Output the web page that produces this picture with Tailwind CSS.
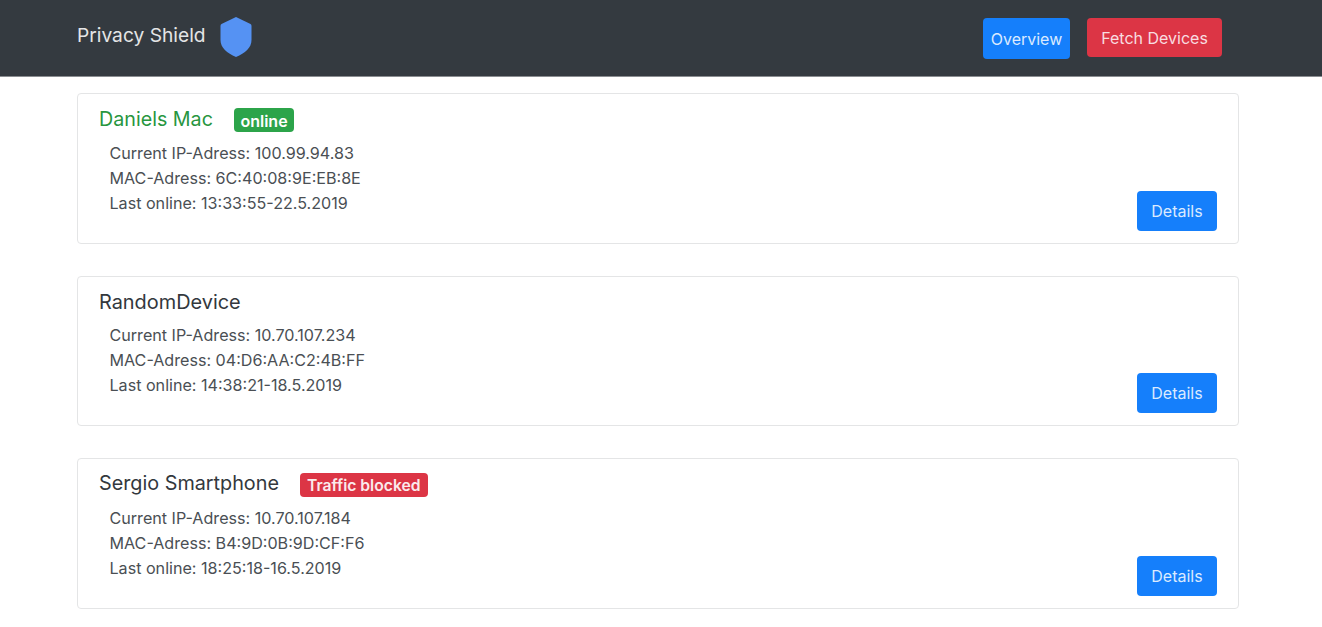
<!DOCTYPE html>
<html lang="en">
<head>
    <meta charset="UTF-8">
    <title>Privacy Shield</title>
    <script src="https://cdn.jsdelivr.net/npm/@tailwindcss/browser@4"></script>
</head>
<body class="bg-white font-['Inter','Liberation_Sans',sans-serif] text-[#343a40]">
    <!-- Navbar -->
    <nav class="h-[77px] bg-[#343a40] border-b border-[#8a8d91] flex items-center pl-[77px] pr-[100px]">
        <span class="text-[19.2px] text-[#e4e5e6] leading-none mb-[4px]">Privacy Shield</span>
        <svg class="ml-[14px] mb-[3px]" width="32" height="42" viewBox="0 0 32 42">
            <path d="M16 1 L30.5 8 Q31.5 8.5 31.5 10 V24 C31.5 32 25 37 16 41 C7 37 0.5 32 0.5 24 V10 Q0.5 8.5 1.5 8 Z" fill="#5592f3"/>
        </svg>
        <div class="ml-auto flex items-start gap-[17px] mt-[1px]">
            <button class="w-[87px] h-[41px] bg-[#157ffb] rounded text-[#dbeaff] text-[16px]">Overview</button>
            <button class="w-[135px] h-[39px] bg-[#dc3545] rounded text-[#f8dde0] text-[16px]">Fetch Devices</button>
        </div>
    </nav>

    <main class="pl-[77px] pr-[83px] pt-[16px] flex flex-col gap-[32px]">
        <!-- Device card -->
        <section class="h-[151px] border border-[#e4e5e6] rounded px-[21px] pt-[12px] flex justify-between">
            <div>
                <div class="flex items-center h-[28px]">
                    <h2 class="text-[19.7px] text-[#28963f]">Daniels Mac</h2>
                    <span class="ml-[21px] h-[24px] px-[6.5px] bg-[#2ca44a] rounded text-white text-[16px] font-semibold leading-[26px]">online</span>
                </div>
                <div class="mt-[7px] ml-[10.5px] text-[16.13px] leading-[25px] text-[#4a4f54]">
                    <p>Current IP-Adress: 100.99.94.83</p>
                    <p>MAC-Adress: 6C:40:08:9E:EB:8E</p>
                    <p>Last online: 13:33:55-22.5.2019</p>
                </div>
            </div>
            <button class="self-end mb-[12px] w-[80px] h-[40px] bg-[#157ffb] rounded text-[#dbeaff] text-[16px]">Details</button>
        </section>

        <section class="h-[150px] border border-[#e4e5e6] rounded px-[21px] pt-[12px] flex justify-between">
            <div>
                <div class="flex items-center h-[28px]">
                    <h2 class="text-[19.9px] text-[#33383d]">RandomDevice</h2>
                </div>
                <div class="mt-[6px] ml-[10.5px] text-[16.13px] leading-[25px] text-[#4a4f54]">
                    <p>Current IP-Adress: 10.70.107.234</p>
                    <p>MAC-Adress: 04:D6:AA:C2:4B:FF</p>
                    <p>Last online: 14:38:21-18.5.2019</p>
                </div>
            </div>
            <button class="self-end mb-[12px] w-[80px] h-[40px] bg-[#157ffb] rounded text-[#dbeaff] text-[16px]">Details</button>
        </section>

        <section class="h-[151px] border border-[#e4e5e6] rounded px-[21px] pt-[11px] flex justify-between">
            <div>
                <div class="flex items-center h-[28px]">
                    <h2 class="text-[19.8px] text-[#33383d]">Sergio Smartphone</h2>
                    <span class="ml-[21px] mt-[2px] h-[24px] px-[7px] bg-[#dc3545] rounded text-[#fbeaec] text-[15.7px] font-semibold leading-[26px]">Traffic blocked</span>
                </div>
                <div class="mt-[8px] ml-[10.5px] text-[16.13px] leading-[25px] text-[#4a4f54]">
                    <p>Current IP-Adress: 10.70.107.184</p>
                    <p>MAC-Adress: B4:9D:0B:9D:CF:F6</p>
                    <p>Last online: 18:25:18-16.5.2019</p>
                </div>
            </div>
            <button class="self-end mb-[12px] w-[80px] h-[40px] bg-[#157ffb] rounded text-[#dbeaff] text-[16px]">Details</button>
        </section>
    </main>
</body>
</html>
